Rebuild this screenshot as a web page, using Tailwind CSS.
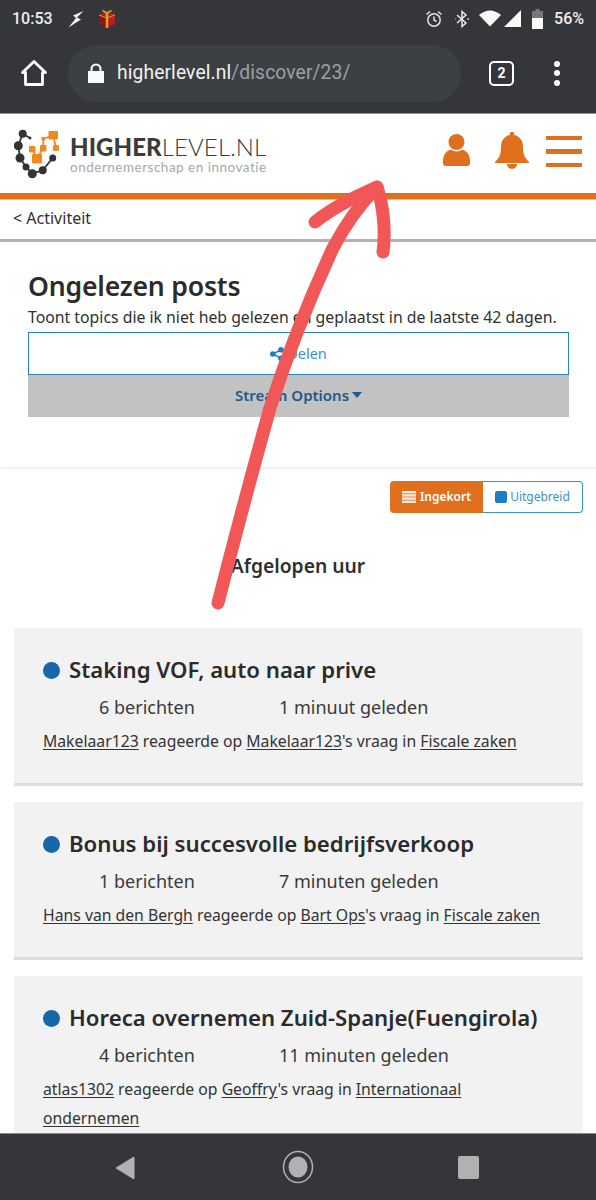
<!DOCTYPE html>
<html lang="nl">
<head>
<meta charset="utf-8">
<title>Ongelezen posts</title>
<script src="https://cdn.jsdelivr.net/npm/@tailwindcss/browser@4"></script>
</head>
<body class="bg-white font-['Noto_Sans',sans-serif] text-[#2b2b2b]">
<div class="relative w-[596px] h-[1200px] overflow-hidden flex flex-col">

  <!-- Android status bar + browser chrome -->
  <div class="h-[114px] shrink-0 bg-[#35363a] border-b border-[#8a8a8a] flex flex-col text-white font-['Roboto',sans-serif]">
    <div class="h-[37px] flex items-center justify-between pl-[12px] pr-[12px] shrink-0">
      <div class="flex items-center">
        <span class="text-[16px] font-medium text-[#eeeeee] w-[56px]">10:53</span>
        <svg class="w-[16px] h-[18px]" viewBox="0 0 16 18"><path d="M15.500 1 L5 5.500 L8 8 L0.500 17.500 L13 9.500 L9 7.500 Z" fill="#f2f2f2"/></svg>
        <svg class="w-[18px] h-[20px] ml-[14px]" viewBox="0 0 18 20"><path d="M1 5 L9 3 L17 5 L17 15 L9 19 L1 15 Z" fill="#b3201f"/><path d="M1 5 L9 8 L9 19 L1 15 Z" fill="#8e1716"/><path d="M9 3 L9 19" stroke="#d9a12c" stroke-width="2.500"/><path d="M1 6 L9 9 L17 6" stroke="#d9a12c" stroke-width="1" fill="none"/><path d="M4.500 1.500 L9 4 L13.500 1.500" stroke="#d9a12c" stroke-width="1.800" fill="none"/></svg>
      </div>
      <div class="flex items-center">
        <svg class="w-[18px] h-[18px]" viewBox="0 0 18 18" fill="none" stroke="#e4e4e4" stroke-width="1.500"><circle cx="9" cy="10" r="6.200"/><path d="M9 6.500 V10 L11.500 11.500"/><path d="M1.500 4.500 L5 1.500 M16.500 4.500 L13 1.500"/></svg>
        <svg class="w-[16px] h-[18px] ml-[11px]" viewBox="0 0 16 18" fill="none" stroke="#e8e8e8" stroke-width="1.500"><path d="M3 5 L12 13 L8 16.500 V1.500 L12 5 L3 13"/><path d="M13.500 9 H15 M1 9 H1.500"/></svg>
        <svg class="w-[22px] h-[17px] ml-[9px]" viewBox="0 0 22 17"><path d="M0 5 Q11 -4 22 5 L11 16.500 Z" fill="#fafafa"/></svg>
        <svg class="w-[17px] h-[17px] ml-[3px]" viewBox="0 0 17 17"><path d="M17 0 V17 H0 Z" fill="#fafafa"/></svg>
        <svg class="w-[11px] h-[20px] ml-[11px]" viewBox="0 0 11 20"><path d="M3.500 0 H7.500 V2 H11 V9 H0 V2 H3.500 Z" fill="#77787a"/><path d="M0 9 H11 V20 H0 Z" fill="#fafafa"/></svg>
        <span class="text-[16px] font-medium text-[#eeeeee] ml-[11px]">56%</span>
      </div>
    </div>
    <div class="flex items-center h-[76px] relative -top-[2px]">
      <svg class="w-[28px] h-[28px] ml-[20px]" viewBox="0 0 28 28" fill="none" stroke="#ffffff" stroke-width="2.800" stroke-linejoin="round"><path d="M2.500 13.500 L14 2.500 L25.500 13.500 H22.500 V25.500 H5.500 V13.500 Z"/></svg>
      <div class="ml-[20px] w-[393px] h-[57px] rounded-full bg-[#3c4043] flex items-center">
        <svg class="w-[16px] h-[20px] ml-[20px]" viewBox="0 0 16 20"><path d="M0 8 H16 V20 H0 Z" fill="#fafafa"/><path d="M3.500 8 V6 A4.500 4.500 0 0 1 12.500 6 V8" fill="none" stroke="#fafafa" stroke-width="2"/></svg>
        <span class="ml-[13px] text-[19.300px] tracking-[0.1px] text-[#f1f1f1]">higherlevel.nl<span class="text-[#9aa0a6]">/discover/23/</span></span>
      </div>
      <div class="ml-[28px] w-[25px] h-[25px] rounded-[5px] border-[2.500px] border-white flex items-center justify-center text-[14px] font-bold">2</div>
      <div class="ml-[40px] flex flex-col gap-[3.500px]">
        <span class="w-[6px] h-[6px] rounded-full bg-white"></span>
        <span class="w-[6px] h-[6px] rounded-full bg-white"></span>
        <span class="w-[6px] h-[6px] rounded-full bg-white"></span>
      </div>
    </div>
  </div>

  <!-- Site header -->
  <div class="h-[79px] shrink-0 flex items-center relative">
    <div class="ml-[14px] flex items-center">
      <svg class="w-[46px] h-[52px]" viewBox="0 0 46 52" fill="none">
        <g stroke="#333333" stroke-width="1.800"><path d="M16 10 L8.700 5.700 L4.300 17.700 L6 30 L12 39 L18.300 45.700 L28.700 42.300 L38.700 30"/></g>
        <g fill="#333333"><circle cx="8.700" cy="5.700" r="4"/><circle cx="16" cy="10" r="1.500"/><circle cx="4.300" cy="17.700" r="4.500"/><circle cx="6" cy="30" r="4.500"/><circle cx="12" cy="39" r="3.500"/><circle cx="18.300" cy="45.700" r="4.500"/><circle cx="28.700" cy="42.300" r="4"/><circle cx="38.700" cy="30" r="3.500"/></g>
        <g stroke="#ef8a1d" stroke-width="1.800"><path d="M18.300 21 L22.700 30.700 L29.300 20 V10.700 L39.300 7.700 L42 20"/></g>
        <g fill="#ef8a1d"><rect x="15" y="18" width="6.500" height="6.500" rx="1"/><rect x="26" y="17" width="6.500" height="6.500" rx="1"/><rect x="18" y="26" width="10" height="9.500" rx="1"/><rect x="34.500" y="3" width="9.500" height="8.500" rx="1"/><rect x="39" y="17" width="6" height="6" rx="1"/><rect x="27.500" y="9" width="3.500" height="3.500"/></g>
      </svg>
      <div class="ml-[10px] flex flex-col font-['Lato',sans-serif] leading-none relative top-[1px]">
        <div class="text-[24px] leading-[26px] text-[#3b3b3b] tracking-[0.1px]"><span class="font-black">HIGHER</span><span class="font-light">LEVEL.NL</span></div>
        <div class="text-[13.500px] leading-[15px] text-[#a8a8a8] tracking-[0.5px]">ondernemerschap en innovatie</div>
      </div>
    </div>
    <div class="ml-auto flex items-center pr-[14px]">
      <svg class="w-[27px] h-[33px] relative -top-[3px]" viewBox="0 0 27 33" fill="#e1701e"><circle cx="13.500" cy="8" r="8"/><path d="M0 27 C0 20 4 16.500 8 15.500 C11 18 16 18 19 15.500 C23 16.500 27 20 27 27 V29 Q27 32 24 32 H3 Q0 32 0 29 Z"/></svg>
      <svg class="w-[34px] h-[38px] ml-[25px] relative -top-[3px]" viewBox="0 0 34 38" fill="#e1701e"><path d="M17 0 a2 2 0 0 1 2 3 C25 4 28 9 28 15 C28 23 30 26 34 30 V31 H0 V30 C4 26 6 23 6 15 C6 9 9 4 15 3 a2 2 0 0 1 2 -3 Z"/><path d="M12 32 H22 A5 5 0 0 1 12 32 Z"/></svg>
      <div class="ml-[17px] w-[36px] flex flex-col gap-[9px] relative top-[-2px]">
        <span class="h-[4.500px] bg-[#e1701e]"></span>
        <span class="h-[4.500px] bg-[#e1701e]"></span>
        <span class="h-[4.500px] bg-[#e1701e]"></span>
      </div>
    </div>
  </div>
  <div class="h-[7px] shrink-0 bg-[#e1701e] border-b border-[#f0b088]"></div>

  <!-- Breadcrumb -->
  <div class="h-[42px] shrink-0 flex items-center pl-[13px] border-b-[3px] border-[#b3b3b3] text-[16px] text-[#2f2f2f] pb-[4px]">&lt; Activiteit</div>

  <!-- Page intro -->
  <div class="h-[226px] shrink-0 px-[28px] pt-[26px] border-b border-[#f0f0f0] shadow-[0_1px_3px_rgba(0,0,0,0.06)]">
    <h1 class="text-[26.600px] leading-[36px] font-semibold text-[#2b2b2b] tracking-[-0.2px]">Ongelezen posts</h1>
    <p class="text-[15.800px] leading-[24px] mt-[1px] whitespace-nowrap text-[#2f2f2f]">Toont topics die ik niet heb gelezen en geplaatst in de laatste 42 dagen.</p>
    <div class="mt-[3px] w-[541px] h-[43px] border border-[#2a80c4] flex items-center justify-center text-[14.500px] text-[#3a8fd0]">
      <svg class="w-[14px] h-[14px] mr-[3px]" viewBox="0 0 14 14" fill="#1f7cc4"><circle cx="2.800" cy="7" r="2.800"/><circle cx="11" cy="2.800" r="2.800"/><circle cx="11" cy="11.200" r="2.800"/><path d="M2.800 7 L11 2.800 M2.800 7 L11 11.200" stroke="#1f7cc4" stroke-width="1.500"/></svg>
      <span>Delen</span>
    </div>
    <div class="w-[541px] h-[42px] bg-[#c2c2c2] flex items-center justify-center text-[15px] font-semibold text-[#1c5a8c] pb-[2px]">
      <span>Stream Options</span>
      <svg class="w-[10px] h-[6px] ml-[3px]" viewBox="0 0 10 6" fill="#1c5a8c"><path d="M0 0 H10 L5 6 Z"/></svg>
    </div>
  </div>

  <!-- View toggle -->
  <div class="shrink-0 flex justify-end pr-[13px] pt-[13px]">
    <div class="flex h-[32px] text-[12px] rounded-[4px]">
      <div class="w-[93px] bg-[#e1701e] rounded-l-[4px] flex items-center justify-center font-semibold text-white">
        <svg class="w-[14px] h-[12px] mr-[4px]" viewBox="0 0 14 12" fill="#ffffff" fill-opacity="0.85"><rect y="0" width="14" height="2.400"/><rect y="3.200" width="14" height="2.400"/><rect y="6.400" width="14" height="2.400"/><rect y="9.600" width="14" height="2.400"/></svg>
        Ingekort
      </div>
      <div class="w-[100px] border border-l-0 border-[#3a8fd0] rounded-r-[4px] flex items-center justify-center text-[#3a8fd0]">
        <span class="w-[12px] h-[12px] rounded-[2px] bg-[#1f7cc4] mr-[3px]"></span>
        Uitgebreid
      </div>
    </div>
  </div>

  <!-- Section heading -->
  <h2 class="shrink-0 text-[19.300px] leading-[26px] font-semibold text-center mt-[40px] text-[#2f2f2f]">Afgelopen uur</h2>

  <!-- Topic cards -->
  <div class="shrink-0 flex flex-col gap-[16px] pl-[14px] pr-[13px] mt-[49px]">
    <article class="h-[158px] bg-[#f2f2f2] border-b-[3px] border-[#dddddd] pt-[27px] pl-[29px]">
      <div class="flex items-center h-[30px]"><span class="w-[17px] h-[17px] rounded-full bg-[#1766a8] shrink-0"></span><h3 class="ml-[9px] text-[22.200px] font-semibold text-[#2b2b2b] whitespace-nowrap">Staking VOF, auto naar prive</h3></div>
      <div class="flex text-[18px] leading-[26px] mt-[9px] text-[#3a3a3a]"><span class="ml-[56px] w-[180px]">6 berichten</span><span>1 minuut geleden</span></div>
      <p class="text-[15.750px] leading-[29px] mt-[7px] text-[#333333]"><span class="underline underline-offset-2">Makelaar123</span> reageerde op <span class="underline underline-offset-2">Makelaar123</span>'s vraag in <span class="underline underline-offset-2">Fiscale zaken</span></p>
    </article>
    <article class="h-[158px] bg-[#f2f2f2] border-b-[3px] border-[#dddddd] pt-[27px] pl-[29px]">
      <div class="flex items-center h-[30px]"><span class="w-[17px] h-[17px] rounded-full bg-[#1766a8] shrink-0"></span><h3 class="ml-[9px] text-[22.200px] font-semibold text-[#2b2b2b] whitespace-nowrap">Bonus bij succesvolle bedrijfsverkoop</h3></div>
      <div class="flex text-[18px] leading-[26px] mt-[9px] text-[#3a3a3a]"><span class="ml-[56px] w-[180px]">1 berichten</span><span>7 minuten geleden</span></div>
      <p class="text-[15.750px] leading-[29px] mt-[7px] text-[#333333]"><span class="underline underline-offset-2">Hans van den Bergh</span> reageerde op <span class="underline underline-offset-2">Bart Ops</span>'s vraag in <span class="underline underline-offset-2">Fiscale zaken</span></p>
    </article>
    <article class="bg-[#f2f2f2] pt-[27px] pl-[29px] pb-[40px]">
      <div class="flex items-center h-[30px]"><span class="w-[17px] h-[17px] rounded-full bg-[#1766a8] shrink-0"></span><h3 class="ml-[9px] text-[22.200px] font-semibold text-[#2b2b2b] whitespace-nowrap">Horeca overnemen Zuid-Spanje(Fuengirola)</h3></div>
      <div class="flex text-[18px] leading-[26px] mt-[9px] text-[#3a3a3a]"><span class="ml-[56px] w-[180px]">4 berichten</span><span>11 minuten geleden</span></div>
      <p class="text-[15.750px] leading-[29px] mt-[7px] text-[#333333] w-[490px]"><span class="underline underline-offset-2">atlas1302</span> reageerde op <span class="underline underline-offset-2">Geoffry</span>'s vraag in <span class="underline underline-offset-2">Internationaal ondernemen</span></p>
    </article>
  </div>

  <!-- Android nav bar -->
  <div class="absolute left-0 right-0 bottom-0 h-[67px] bg-[#35363a] border-t border-[#8a8a8a] flex items-center">
    <svg class="absolute left-[115px] top-[22px] w-[20px] h-[24px]" viewBox="0 0 20 24"><path d="M19 1 V23 L1 12 Z" fill="#b0b1b3" stroke="#b0b1b3" stroke-linejoin="round"/></svg>
    <svg class="absolute left-[282px] top-[16px] w-[32px] h-[34px]" viewBox="0 0 32 34"><ellipse cx="16" cy="17" rx="14.500" ry="15.500" fill="none" stroke="#b0b1b3" stroke-width="1.500"/><ellipse cx="16" cy="17" rx="9.500" ry="10.500" fill="#b0b1b3"/></svg>
    <div class="absolute left-[458px] top-[22px] w-[21px] h-[23px] rounded-[2px] bg-[#b0b1b3]"></div>
  </div>

  <!-- Hand-drawn annotation arrow -->
  <svg class="absolute left-0 top-0 w-[596px] h-[1200px] pointer-events-none" viewBox="0 0 596 1200" fill="none" stroke="#f25757" stroke-width="13" stroke-linecap="round" stroke-linejoin="round">
    <path d="M218 603 Q243 505 270 408 Q296 328 333 248 Q352 212 377 187"/>
    <path d="M315 222 C335 206 355 197 377 187 C383 205 386 230 383 252"/>
  </svg>
</div>
</body>
</html>
